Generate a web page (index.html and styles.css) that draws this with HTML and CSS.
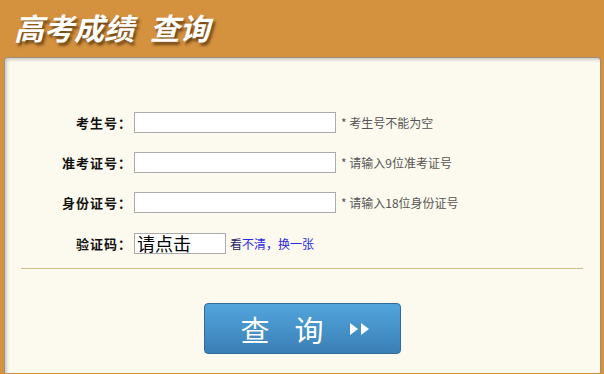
FILE: index.html
```html
<!DOCTYPE html>
<html lang="zh-CN">
<head>
    <meta charset="UTF-8">
    <meta name="viewport" content="width=device-width, initial-scale=1.0">
    <title>高考成绩查询</title>
    <link rel="stylesheet" href="styles.css">
</head>
<body>
    <div class="header">
        <h1 class="title">高考成绩 查询</h1>
    </div>
    <div class="panel">
        <form class="form">
            <div class="row">
                <label class="label">考生号<span class="colon">：</span></label>
                <input class="field" type="text">
                <span class="hint">* 考生号不能为空</span>
            </div>
            <div class="row">
                <label class="label">准考证号<span class="colon">：</span></label>
                <input class="field" type="text">
                <span class="hint">* 请输入9位准考证号</span>
            </div>
            <div class="row">
                <label class="label">身份证号<span class="colon">：</span></label>
                <input class="field" type="text">
                <span class="hint">* 请输入18位身份证号</span>
            </div>
            <div class="row row_code">
                <label class="label">验证码<span class="colon">：</span></label>
                <div class="code">请点击</div>
                <span class="refresh"><span class="dark">看</span>不清，换一张</span>
            </div>
        </form>
        <div class="divider"></div>
        <div class="actions">
            <button class="btn" type="button">
                <span class="btn-text">查</span>
                <span class="btn-text">询</span>
                <svg class="btn-arrow" width="22" height="12" viewBox="0 0 22 12">
                    <polygon points="1,0 9,6 1,12" fill="#fff"/>
                    <polygon points="12,0 20,6 12,12" fill="#fff"/>
                </svg>
            </button>
        </div>
    </div>
</body>
</html>
```

FILE: styles.css
```css
html, body {
    height: 100%;
}
body {
    margin: 0;
    background-color: #D4923F;
    font-family: "Noto Sans CJK SC", "Liberation Sans", sans-serif;
    overflow: hidden;
}
.header {
    height: 57px;
    padding-left: 14px;
}
.title {
    margin: 0;
    line-height: 54px;
    font-size: 30px;
    font-weight: bold;
    font-style: italic;
    word-spacing: 9px;
    color: #fff;
    text-shadow: 2px 3px 3px rgba(60, 30, 0, 0.7);
}
.panel {
    height: 315px;
    margin: 0 3px 0 4px;
    background-color: #FCFAEE;
    border: 1px solid #9b8f7e;
    border-bottom: 0;
    border-radius: 4px 4px 0 0;
    box-shadow: inset 2px 2px 3px rgba(0, 0, 0, 0.18);
}
.form {
    padding-top: 54px;
    display: flex;
    flex-direction: column;
    gap: 19px;
}
.row {
    display: flex;
    align-items: center;
    height: 21px;
}
.row_code {
    margin-top: 1px;
}
.label {
    width: 126px;
    margin-right: 3px;
    text-align: right;
    font-size: 13px;
    font-weight: bold;
    letter-spacing: 1px;
    color: #111;
}
.colon {
    font-family: "Noto Sans CJK TC", sans-serif;
    letter-spacing: 0;
}
.field {
    box-sizing: border-box;
    width: 202px;
    height: 21px;
    margin: 0;
    border: 1px solid #ababab;
    background: #fff;
}
.hint {
    margin-left: 5px;
    font-size: 12px;
    color: #555;
}
.code {
    box-sizing: border-box;
    width: 92px;
    height: 21px;
    padding-left: 2px;
    border: 1px solid #ababab;
    background: #fff;
    font-size: 18px;
    line-height: 19px;
    color: #000;
}
.refresh {
    margin-left: 4px;
    font-size: 12px;
    color: #2a2ae0;
}
.dark {
    color: #222266;
}
.divider {
    height: 1px;
    margin: 14px 17px 0 16px;
    background-color: #CDBF86;
}
.actions {
    display: flex;
    justify-content: center;
    padding-top: 34px;
}
.btn {
    box-sizing: border-box;
    width: 197px;
    height: 51px;
    display: flex;
    align-items: center;
    justify-content: center;
    padding: 0 0 0 6px;
    border: 1px solid #2f6a98;
    border-radius: 4px;
    background: linear-gradient(#52a5dc, #3a7fb6);
    font-family: "Noto Sans CJK SC", sans-serif;
    cursor: pointer;
}
.btn-text {
    font-size: 29px;
    color: #fff;
    margin-right: 25px;
}
```
